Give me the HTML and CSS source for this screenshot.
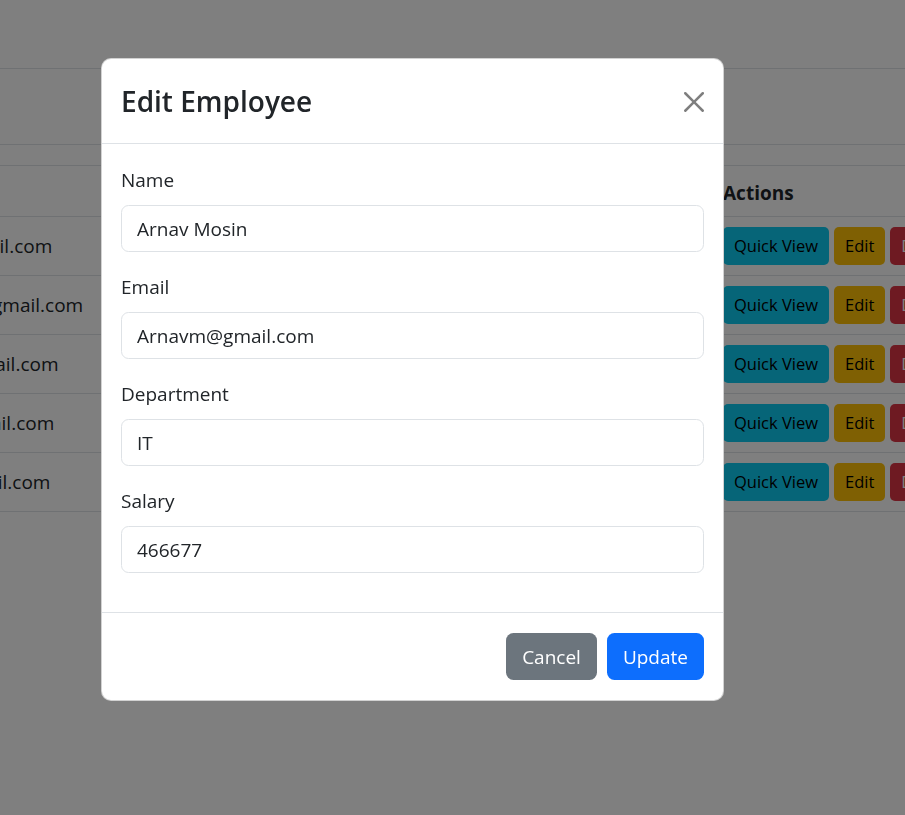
FILE: index.html
```html
<!DOCTYPE html>
<html lang="en">
<head>
<meta charset="utf-8">
<title>Employees</title>
<link rel="stylesheet" href="styles.css">
</head>
<body>
<div class="page">
  <div class="toolbar"></div>
  <div class="table-wrap">
    <table class="emp-table">
      <colgroup>
        <col class="col-email">
        <col class="col-dept">
        <col class="col-salary">
        <col class="col-actions">
      </colgroup>
      <thead>
        <tr><th>Email</th><th>Department</th><th>Salary</th><th>Actions</th></tr>
      </thead>
      <tbody>
        <tr><td>Arnavm@gmail.com</td><td>IT</td><td>466677</td><td><span class="btn btn-info">Quick View</span><span class="btn btn-warning">Edit</span><span class="btn btn-danger">Delete</span></td></tr>
        <tr><td>rohitkumar@gmail.com</td><td>HR</td><td>52000</td><td><span class="btn btn-info">Quick View</span><span class="btn btn-warning">Edit</span><span class="btn btn-danger">Delete</span></td></tr>
        <tr><td>sneha12@gmail.com</td><td>Sales</td><td>48000</td><td><span class="btn btn-info">Quick View</span><span class="btn btn-warning">Edit</span><span class="btn btn-danger">Delete</span></td></tr>
        <tr><td>vikram7@gmail.com</td><td>Finance</td><td>61000</td><td><span class="btn btn-info">Quick View</span><span class="btn btn-warning">Edit</span><span class="btn btn-danger">Delete</span></td></tr>
        <tr><td>meerak@gmail.com</td><td>IT</td><td>57000</td><td><span class="btn btn-info">Quick View</span><span class="btn btn-warning">Edit</span><span class="btn btn-danger">Delete</span></td></tr>
      </tbody>
    </table>
  </div>
</div>

<div class="backdrop"></div>

<div class="modal">
  <div class="modal-header">
    <h4 class="modal-title">Edit Employee</h4>
    <button class="btn-close" type="button" aria-label="Close">
      <svg viewBox="0 0 16 16" width="20" height="20"><path fill="currentColor" d="M.293.293a1 1 0 0 1 1.414 0L8 6.586 14.293.293a1 1 0 1 1 1.414 1.414L9.414 8l6.293 6.293a1 1 0 0 1-1.414 1.414L8 9.414l-6.293 6.293a1 1 0 0 1-1.414-1.414L6.586 8 .293 1.707a1 1 0 0 1 0-1.414z"/></svg>
    </button>
  </div>
  <div class="modal-body">
    <div class="field">
      <label class="form-label">Name</label>
      <div class="form-control">Arnav Mosin</div>
    </div>
    <div class="field">
      <label class="form-label">Email</label>
      <div class="form-control">Arnavm@gmail.com</div>
    </div>
    <div class="field">
      <label class="form-label">Department</label>
      <div class="form-control">IT</div>
    </div>
    <div class="field">
      <label class="form-label">Salary</label>
      <div class="form-control">466677</div>
    </div>
  </div>
  <div class="modal-footer">
    <button class="mbtn mbtn-secondary" type="button">Cancel</button>
    <button class="mbtn mbtn-primary" type="button">Update</button>
  </div>
</div>
</body>
</html>
```

FILE: styles.css
```css
* { box-sizing: border-box; }

html, body {
  margin: 0;
  padding: 0;
  overflow: hidden;
}

body {
  background: #fff;
  color: #212529;
  font-family: "Open Sans", "Noto Sans", "DejaVu Sans", sans-serif;
  font-size: 19px;
  line-height: 30px;
  width: 905px;
  height: 815px;
}

.page {
  padding-top: 68px;
}

.toolbar {
  height: 77px;
  border-top: 1px solid #dee2e6;
  border-bottom: 1px solid #dee2e6;
  margin-bottom: 20px;
}

.table-wrap {
  margin-left: -135px;
  width: 1200px;
}

.emp-table {
  width: 1200px;
  table-layout: fixed;
  border-collapse: collapse;
}

.col-email { width: 320px; }
.col-dept { width: 300px; }
.col-salary { width: 228px; }
.col-actions { width: 352px; }

.emp-table th,
.emp-table td {
  text-align: left;
  padding: 10px;
  border-bottom: 1px solid #dee2e6;
  white-space: nowrap;
  vertical-align: middle;
}

.emp-table td {
  height: 59px;
}

.emp-table thead tr {
  border-top: 1px solid #dee2e6;
}

.emp-table th {
  font-weight: 700;
  padding-top: 12px;
  padding-bottom: 8px;
}

.btn {
  display: inline-block;
  font-size: 16.5px;
  line-height: 26px;
  padding: 5px 10px;
  border: 1px solid transparent;
  border-radius: 5px;
  margin-right: 5px;
  color: #000;
  vertical-align: middle;
}

.btn-info { background: #0dcaf0; }
.btn-warning { background: #ffc107; }
.btn-danger { background: #dc3545; color: #fff; }

.backdrop {
  position: fixed;
  inset: 0;
  background: rgba(0, 0, 0, 0.5);
}

.modal {
  position: absolute;
  top: 58px;
  left: 101px;
  width: 623px;
  background: #fff;
  border: 1px solid rgba(0, 0, 0, 0.175);
  border-radius: 10px;
  display: flex;
  flex-direction: column;
}

.modal-header {
  display: flex;
  align-items: center;
  justify-content: space-between;
  padding: 20px 19px 20px 19px;
  border-bottom: 1px solid #dee2e6;
  height: 85px;
}

.modal-title {
  margin: 0;
  font-size: 28px;
  font-weight: 600;
  line-height: 45px;
  color: #212529;
}

.btn-close {
  border: 0;
  background: transparent;
  padding: 0;
  width: 20px;
  height: 20px;
  color: #000;
  opacity: 0.5;
  display: flex;
  margin-top: 1px;
}

.btn-close svg { display: block; }

.modal-body {
  padding: 21px 19px 0 19px;
}

.field {
  margin-bottom: 20px;
}

.form-label {
  display: block;
  margin-bottom: 10px;
}

.form-control {
  height: 47px;
  border: 1px solid #dee2e6;
  border-radius: 7.5px;
  padding: 7.5px 15px;
  line-height: 30px;
  color: #212529;
  background: #fff;
}

.modal-footer {
  display: flex;
  justify-content: flex-end;
  align-items: center;
  gap: 10px;
  padding: 20px 19px;
  border-top: 1px solid #dee2e6;
  margin-top: 19px;
}

.mbtn {
  font-family: inherit;
  font-size: 19px;
  line-height: 30px;
  padding: 7.5px 15px;
  height: 47px;
  border: 1px solid transparent;
  border-radius: 7.5px;
  color: #fff;
}

.mbtn-secondary { background: #6c757d; }
.mbtn-primary { background: #0d6efd; }
```
